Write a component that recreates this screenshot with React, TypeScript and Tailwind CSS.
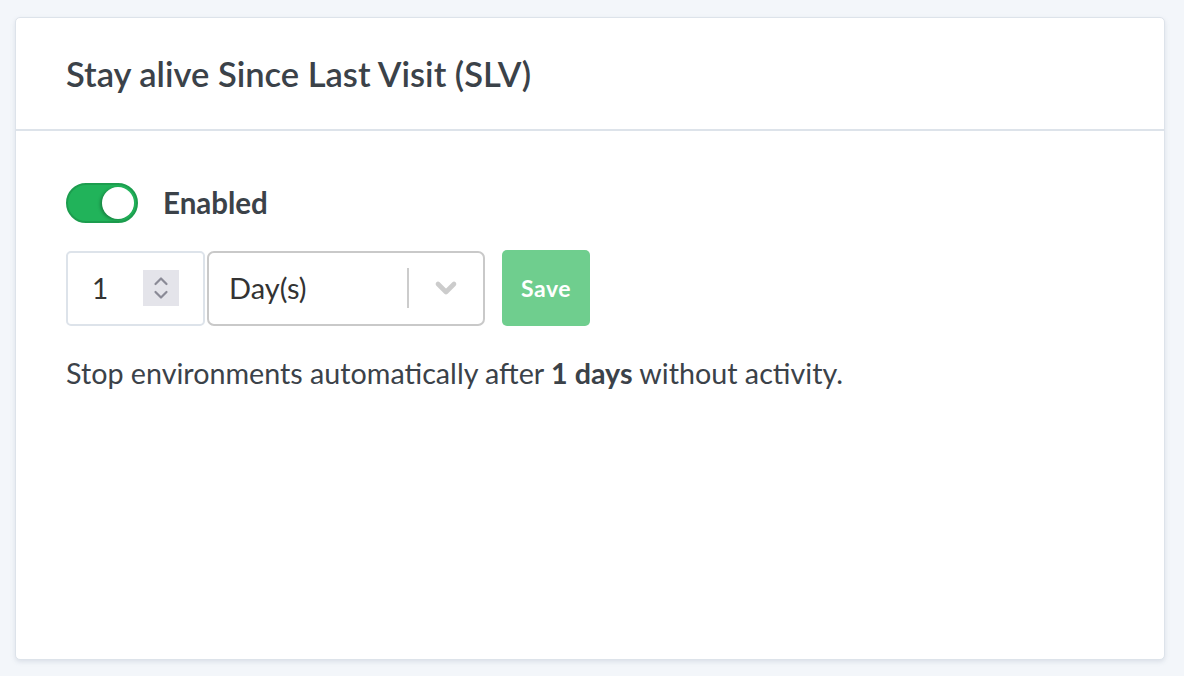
import { ChevronDown } from "lucide-react";

const font = { fontFamily: '"Lato", "Noto Sans", sans-serif' };

const Toggle = () => (
  <div className="relative w-[72px] h-[40px] rounded-full bg-[#21b35a] border-2 border-[#1c9d4e]">
    <div className="absolute right-[2px] top-[2px] w-[32px] h-[32px] rounded-full bg-white shadow-[-2px_1px_3px_rgba(0,0,0,0.25)]" />
  </div>
);

const Spinner = () => (
  <div className="w-[36px] h-[36px] bg-[#e4e4ea] flex items-center justify-center">
    <svg width="18" height="28" viewBox="0 0 18 28" fill="none" stroke="#8a8a96" strokeWidth="2.2" strokeLinecap="round" strokeLinejoin="round">
      <path d="M3.5 10 L9 4.5 L14.5 10" />
      <path d="M3.5 18 L9 23.5 L14.5 18" />
    </svg>
  </div>
);

export default function App() {
  return (
    <div className="min-h-screen bg-[#f3f6fa] pt-[17px] pl-[15px] pr-[19px] pb-[16px]" style={font}>
      <div className="h-[643px] bg-white border border-[#dde3ea] rounded-[5px] shadow-[0_2px_4px_rgba(150,165,185,0.25)]">
        <div className="h-[113px] flex items-center px-[50px] border-b-2 border-[#dde3ea]">
          <h2 className="text-[34.5px] leading-[40px] font-semibold text-[#3b4249]">
            Stay alive Since Last Visit (SLV)
          </h2>
        </div>

        <div className="pt-[52px] px-[50px]">
          <div className="flex items-center gap-[25px]">
            <Toggle />
            <span className="text-[29.5px] leading-[36px] font-bold text-[#3b4249]">Enabled</span>
          </div>

          <div className="flex items-center mt-[27px]">
            <div className="w-[139px] h-[75px] border-2 border-[#dde3ea] rounded-[5px] flex items-center justify-between pl-[24px] pr-[24px]">
              <span className="text-[28px] text-[#333]">1</span>
              <Spinner />
            </div>
            <div className="ml-[2px] w-[278px] h-[75px] border-2 border-[#c9c9c9] rounded-[7px] flex items-center">
              <span className="flex-1 pl-[20px] text-[29px] text-[#333]">Day(s)</span>
              <div className="w-[2px] h-[40px] bg-[#cccccc]" />
              <div className="w-[74px] flex items-center justify-center">
                <ChevronDown size={32} strokeWidth={3.5} color="#cccccc" />
              </div>
            </div>
            <button className="ml-[17px] w-[88px] h-[76px] rounded-[5px] bg-[#6fce8e] text-white text-[23px] font-bold tracking-[0.5px]">
              Save
            </button>
          </div>

          <p className="mt-[29px] text-[28.7px] leading-[36px] text-[#3b4249]">
            Stop environments automatically after <span className="font-bold">1 days</span> without activity.
          </p>
        </div>
      </div>
    </div>
  );
}
